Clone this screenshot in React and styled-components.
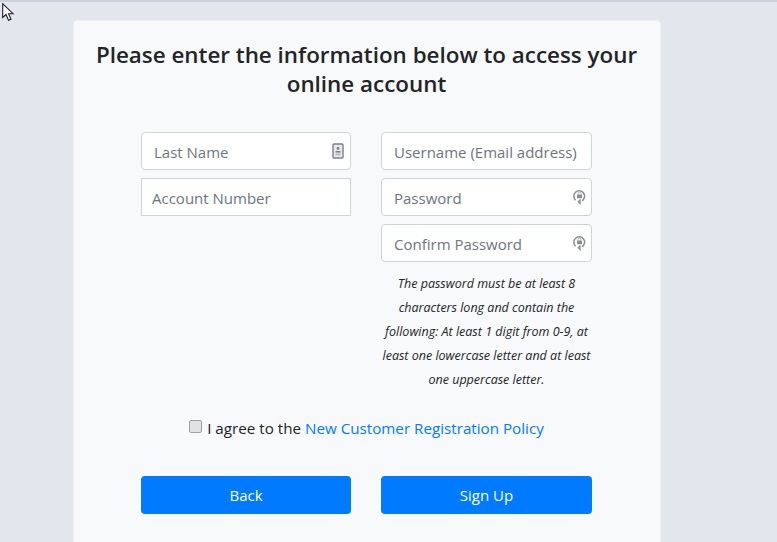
import styled, { createGlobalStyle } from "styled-components";

const GlobalStyle = createGlobalStyle`
  html, body {
    margin: 0;
    height: 100%;
    overflow: hidden;
    background: #e2e6ed;
  }
  body {
    font-family: "Open Sans", "Noto Sans", sans-serif;
    color: #212529;
  }
`;

const Page = styled.div`
  height: 542px;
  box-sizing: border-box;
  border-top: 2px solid #ced1dc;
  padding: 18px 0 0 73px;
  overflow: hidden;
`;

const Cursor = styled.svg`
  position: absolute;
  left: 2px;
  top: 3px;
`;

const Card = styled.main`
  width: 588px;
  height: 600px;
  box-sizing: border-box;
  background: #f8f9fa;
  border: 1px solid #f0f1f5;
  border-radius: 4px;
  padding: 19px 68px 0 67px;
`;

const Title = styled.h1`
  margin: 0 -60px 34px;
  font-size: 22.4px;
  line-height: 29px;
  font-weight: 600;
  text-align: center;
  color: #212529;
`;

const Columns = styled.div`
  display: grid;
  grid-template-columns: 210px 211px;
  column-gap: 30px;
  align-items: start;
`;

const Column = styled.div`
  display: flex;
  flex-direction: column;
  gap: 8px;
`;

const Field = styled.div`
  position: relative;
  height: 38px;
  box-sizing: border-box;
  background: #fff;
  border: 1px solid #ced4da;
  border-radius: ${(p) => (p.$square ? "0" : "4px")};
  display: flex;
  align-items: center;
  padding: 2px 0 0 ${(p) => (p.$square ? "10px" : "12px")};
`;

const Input = styled.input`
  width: 100%;
  border: 0;
  outline: 0;
  padding: 0;
  background: transparent;
  font: 15px "Open Sans", sans-serif;
  &::placeholder {
    color: #6c757d;
    opacity: 1;
  }
`;

const FieldIcon = styled.svg`
  position: absolute;
  right: ${(p) => p.$right}px;
  top: 10px;
`;

const Note = styled.p`
  margin: 2px -4px 0;
  font-size: 12.5px;
  line-height: 24px;
  font-style: italic;
  text-align: center;
  color: #212529;
  white-space: nowrap;
`;

const Agree = styled.div`
  margin-top: 24px;
  display: flex;
  justify-content: center;
  align-items: center;
  gap: 5px;
  font-size: 15.2px;
  line-height: 24px;
`;

const Check = styled.input`
  appearance: none;
  width: 13px;
  height: 13px;
  margin: 0 0 3px;
  box-sizing: border-box;
  background: #e2e2e2;
  border: 1px solid #a0a0a0;
  border-radius: 2px;
`;

const PolicyLink = styled.a`
  color: #007bff;
  text-decoration: none;
`;

const Buttons = styled.div`
  margin-top: 36px;
  display: grid;
  grid-template-columns: 210px 211px;
  column-gap: 30px;
`;

const Button = styled.button`
  height: 38px;
  border: 0;
  border-radius: 4px;
  background: #007bff;
  color: #fff;
  font: 15px "Open Sans", sans-serif;
`;

const BadgeIcon = () => (
  <FieldIcon $right={6} width="12" height="16" viewBox="0 0 12 16">
    <rect x="1" y="1" width="10" height="14" rx="1" fill="#e6e8ea" stroke="#7d8185" strokeWidth="1.4" />
    <circle cx="6" cy="5.5" r="1.4" fill="#7d8185" />
    <rect x="3.5" y="8" width="5" height="1.6" fill="#7d8185" />
    <rect x="3.5" y="10.6" width="5" height="1.6" fill="#b4b7ba" />
  </FieldIcon>
);

const LockIcon = () => (
  <FieldIcon $right={5} width="13" height="17" viewBox="0 0 13 17">
    <path d="M2.6 11.2A5.4 5.4 0 1 1 9 11.8" fill="none" stroke="#8a8e92" strokeWidth="1.5" />
    <path d="M7.6 9.6v6.4l-3.2-3.2z" fill="#8a8e92" />
    <rect x="4" y="5.6" width="5" height="3.6" rx="0.5" fill="#8a8e92" />
    <path d="M5 5.6V4.6a1.5 1.5 0 0 1 3 0v1" fill="none" stroke="#a4a8ab" strokeWidth="0.9" />
  </FieldIcon>
);

const App = () => {
  return (
    <>
      <GlobalStyle />
      <Page>
        <Cursor width="14" height="20" viewBox="0 0 14 20">
          <path
            d="M0.7 0.7V14.5L4 11.5L6.5 17.3L9 16.2L6.6 10.7H11z"
            fill="#fff"
            stroke="#1c1c1c"
            strokeWidth="1.1"
          />
        </Cursor>
        <Card>
          <Title>
            Please enter the information below to access your
            <br />
            online account
          </Title>
          <Columns>
            <Column>
              <Field>
                <Input placeholder="Last Name" />
                <BadgeIcon />
              </Field>
              <Field $square>
                <Input placeholder="Account Number" />
              </Field>
            </Column>
            <Column>
              <Field>
                <Input placeholder="Username (Email address)" />
              </Field>
              <Field>
                <Input placeholder="Password" />
                <LockIcon />
              </Field>
              <Field>
                <Input placeholder="Confirm Password" />
                <LockIcon />
              </Field>
              <Note>
                The password must be at least 8
                <br />
                characters long and contain the
                <br />
                following: At least 1 digit from 0-9, at
                <br />
                least one lowercase letter and at least
                <br />
                one uppercase letter.
              </Note>
            </Column>
          </Columns>
          <Agree>
            <Check type="checkbox" />
            <span>
              I agree to the <PolicyLink href="#">New Customer Registration Policy</PolicyLink>
            </span>
          </Agree>
          <Buttons>
            <Button>Back</Button>
            <Button>Sign Up</Button>
          </Buttons>
        </Card>
      </Page>
    </>
  );
};

export default App;
